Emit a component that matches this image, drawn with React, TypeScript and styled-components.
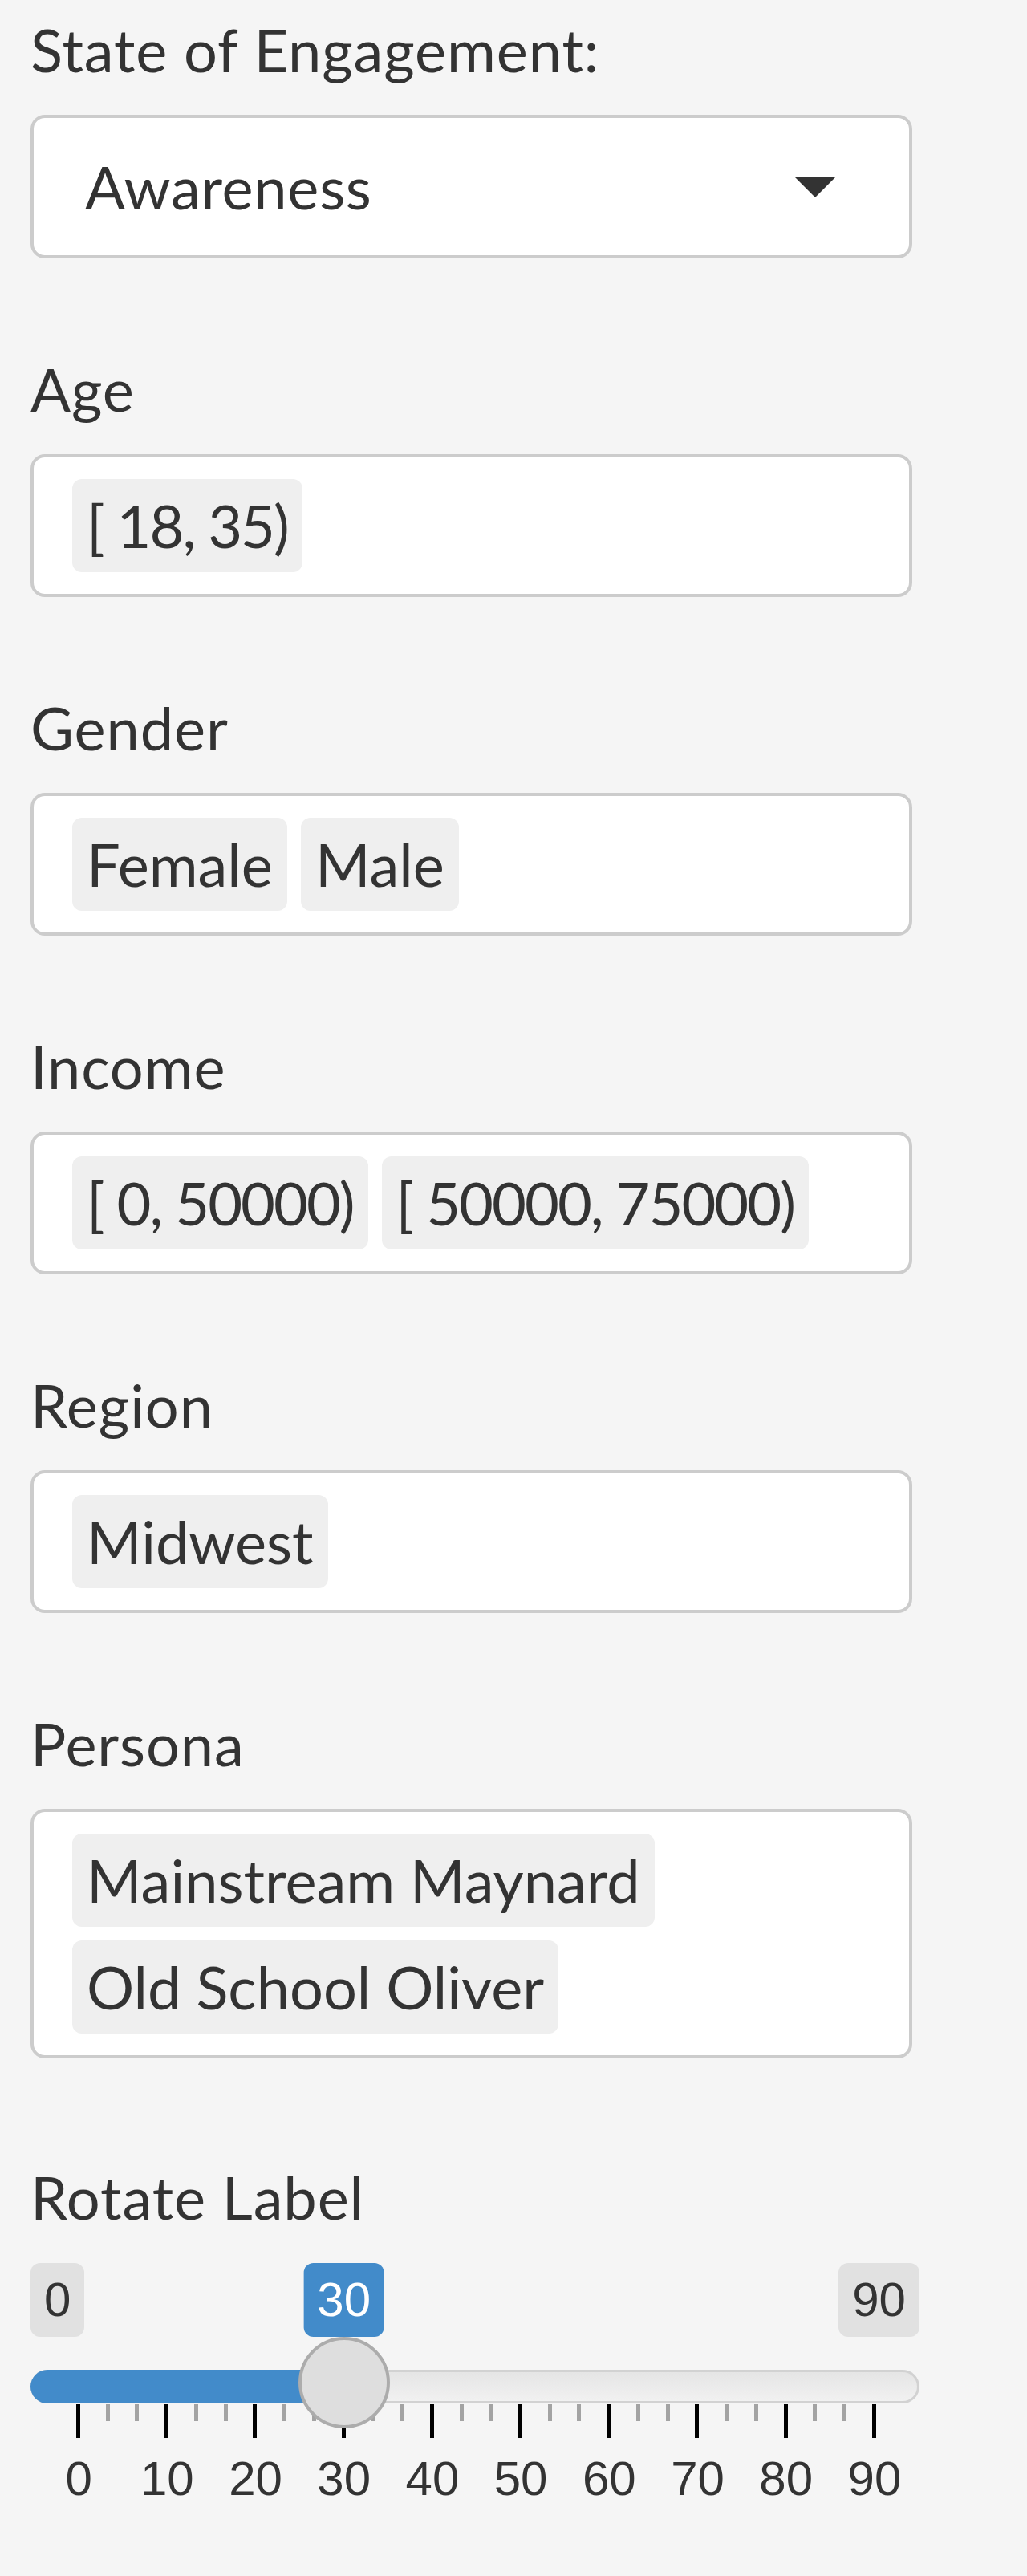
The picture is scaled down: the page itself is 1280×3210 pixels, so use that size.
import styled, { createGlobalStyle } from 'styled-components'

const GlobalStyle = createGlobalStyle`
  html, body {
    margin: 0;
    padding: 0;
    background: #f5f5f5;
  }
  body {
    min-height: 3210px;
    font-family: Lato, 'Open Sans', sans-serif;
    color: #333;
  }
`

const filters = [
  { label: 'Age', items: ['[ 18, 35)'] },
  { label: 'Gender', items: ['Female', 'Male'] },
  { label: 'Income', items: ['[ 0, 50000)', '[ 50000, 75000)'] },
  { label: 'Region', items: ['Midwest'] },
  { label: 'Persona', items: ['Mainstream Maynard', 'Old School Oliver'] }
]

const MIN = 0
const MAX = 90
const VALUE = 30
// px from slider's left edge to the 0 and 90 grid marks
const GRID_START = 60
const GRID_SPAN = 992

const toPx = (v: number) => GRID_START + ((v - MIN) / (MAX - MIN)) * GRID_SPAN

const ticks = Array.from({ length: 28 }, (_, i) => i % 3 === 0)
const gridLabels = Array.from({ length: 10 }, (_, i) => i * 10)

const App = () => {
  const pos = toPx(VALUE)

  return (
    <>
      <GlobalStyle />
      <Sidebar>
        <Group>
          <Label>State of Engagement:</Label>
          <SelectBox>
            <span>Awareness</span>
            <Caret />
          </SelectBox>
        </Group>

        {filters.map((f) => (
          <Group key={f.label}>
            <Label>{f.label}</Label>
            <ChipBox>
              {f.items.map((item) => (
                <Chip key={item} $range={item.startsWith('[')}>
                  {item}
                </Chip>
              ))}
            </ChipBox>
          </Group>
        ))}

        <SliderGroup>
          <Label $gap={30}>Rotate Label</Label>
          <Slider>
            <ValueRow>
              <Tag>{MIN}</Tag>
              <SingleTag style={{ left: pos }}>{VALUE}</SingleTag>
              <Tag>{MAX}</Tag>
            </ValueRow>
            <Bar>
              <Fill style={{ width: pos }} />
              <Handle style={{ left: pos - 57 }} />
            </Bar>
            <Ticks>
              {ticks.map((major, i) => (
                <Tick key={i} $major={major} />
              ))}
            </Ticks>
            <GridLabels>
              {gridLabels.map((n) => (
                <GridLabel key={n}>{n}</GridLabel>
              ))}
            </GridLabels>
          </Slider>
        </SliderGroup>
      </Sidebar>
    </>
  )
}

export default App

const Sidebar = styled.div`
  padding: 9px 0 0 38px;
`

const Group = styled.div`
  margin-bottom: 110px;
`

const SliderGroup = styled.div`
  padding-top: 10px;
`

const Label = styled.label<{ $gap?: number }>`
  display: block;
  font-size: 74px;
  line-height: 105px;
  letter-spacing: 0.9px;
  margin-bottom: ${({ $gap }) => $gap ?? 29}px;
`

const Box = styled.div`
  box-sizing: border-box;
  width: 1099px;
  background: #fff;
  border: 4px solid #ccc;
  border-radius: 18px;
  font-size: 74px;
  line-height: 88px;
  letter-spacing: 0.7px;
`

const SelectBox = styled(Box)`
  height: 179px;
  display: flex;
  align-items: center;
  justify-content: space-between;
  padding: 0 91px 0 64px;
`

const Caret = styled.span`
  width: 0;
  height: 0;
  border-left: 26px solid transparent;
  border-right: 26px solid transparent;
  border-top: 26px solid #333;
`

const ChipBox = styled(Box)`
  display: flex;
  flex-wrap: wrap;
  align-items: flex-start;
  gap: 17px;
  padding: 27px 48px;
`

const Chip = styled.span<{ $range: boolean }>`
  background: #efefef;
  border-radius: 12px;
  padding: 14px 18px;
  white-space: nowrap;
  letter-spacing: ${({ $range }) => ($range ? '-2px' : '0')};
`

const Slider = styled.div`
  position: relative;
  width: 1108px;
  font-family: 'Liberation Sans', Arial, sans-serif;
`

const ValueRow = styled.div`
  position: relative;
  display: flex;
  justify-content: space-between;
  height: 92px;
`

const Tag = styled.span`
  font-size: 60px;
  line-height: 80px;
  padding: 6px 17px;
  border-radius: 12px;
  background: #e1e1e1;
  color: #333;
`

const SingleTag = styled(Tag)`
  position: absolute;
  top: 0;
  transform: translateX(-50%);
  background: #428bca;
  color: #fff;
`

const Bar = styled.div`
  position: relative;
  margin-top: 41px;
  height: 42px;
  border-radius: 21px;
  background: linear-gradient(to bottom, #e4e4e4, #f2f2f2);
  box-shadow: inset 0 0 0 3px #d2d2d2;
`

const Fill = styled.div`
  position: absolute;
  left: 0;
  top: 0;
  bottom: 0;
  background: #428bca;
  border-radius: 21px 0 0 21px;
`

const Handle = styled.div`
  position: absolute;
  top: -41px;
  z-index: 2;
  box-sizing: border-box;
  width: 114px;
  height: 114px;
  border-radius: 50%;
  background: #dedede;
  border: 4px solid #acacac;
`

const Ticks = styled.div`
  display: flex;
  justify-content: space-between;
  align-items: flex-start;
  margin: 1px 0 0 57px;
  width: 997px;
  height: 42px;
`

const Tick = styled.span<{ $major: boolean }>`
  width: 5px;
  height: ${({ $major }) => ($major ? 42 : 21)}px;
  background: ${({ $major }) => ($major ? '#000' : '#a3a3a3')};
`

const GridLabels = styled.div`
  display: flex;
  margin: 16px 0 0 5px;
  width: 1102px;
`

const GridLabel = styled.span`
  flex: 1 1 0;
  text-align: center;
  font-size: 60px;
  line-height: 70px;
  color: #333;
`
